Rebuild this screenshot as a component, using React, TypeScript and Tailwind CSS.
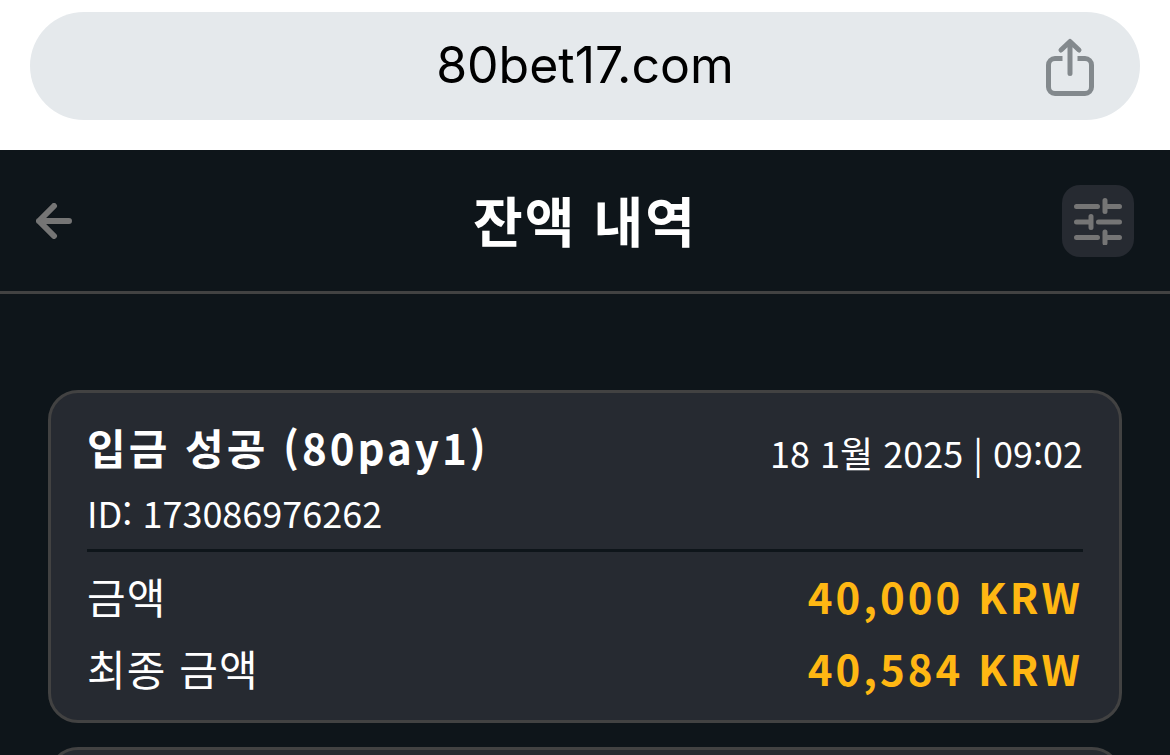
import React from 'react';

interface Transaction {
  id: string;
  title: string;
  date: string;
  dateTime: string;
  amount: string;
  finalAmount: string;
}

const transactions: Transaction[] = [
  {
    id: '173086976262',
    title: '입금 성공 (80pay1)',
    date: '18 1월 2025 | 09:02',
    dateTime: '2025-01-18T09:02',
    amount: '40,000 KRW',
    finalAmount: '40,584 KRW',
  },
];

const ShareIcon: React.FC = () => (
  <svg
    width="48"
    height="60"
    viewBox="0 0 48 60"
    fill="none"
    stroke="currentColor"
    strokeWidth="5"
    aria-hidden="true"
  >
    <path d="M16.500 20.500H9a6.500 6.500 0 0 0-6.500 6.500V49a6.500 6.500 0 0 0 6.500 6.500h30a6.500 6.500 0 0 0 6.500-6.500V27a6.500 6.500 0 0 0-6.500-6.500h-7.500" />
    <path d="M24 35.500V4M15 12 24 3.500l9 8.500" strokeLinecap="round" strokeLinejoin="round" />
  </svg>
);

const BackIcon: React.FC = () => (
  <svg
    width="36"
    height="36"
    viewBox="0 0 36 36"
    fill="none"
    stroke="currentColor"
    strokeWidth="6"
    strokeLinecap="round"
    strokeLinejoin="round"
    aria-hidden="true"
  >
    <path d="M18 3 3 18l15 15M3 18h30" />
    <path d="M4 18 10 12v12z" fill="currentColor" stroke="none" />
  </svg>
);

const FilterIcon: React.FC = () => (
  <svg
    width="48"
    height="48"
    viewBox="0 0 48 48"
    fill="none"
    stroke="currentColor"
    strokeWidth="5"
    strokeLinecap="round"
    aria-hidden="true"
  >
    <path d="M2.500 9.500h21M31 3.500v11M31 9.500h14.500" />
    <path d="M2.500 25h14M17 19.500v11M24.500 25h21" />
    <path d="M2.500 40.500h21M31 35v11M31 40.500h14.500" />
  </svg>
);

const AddressBar: React.FC = () => (
  <div className="bg-white px-[30px] pt-3 pb-[30px]">
    <div className="grid h-[108px] grid-cols-[48px_1fr_48px] items-center rounded-full bg-[#e5e9ec] px-[46px]">
      <span className="col-start-2 pb-0.5 text-center font-[Inter,sans-serif] text-[50px] leading-[60px] text-black">
        80bet17.com
      </span>
      <button type="button" aria-label="공유" className="pt-1 text-[#83898d]">
        <ShareIcon />
      </button>
    </div>
  </div>
);

const PageHeader: React.FC = () => (
  <header className="grid h-36 shrink-0 grid-cols-[72px_1fr_72px] items-center border-b-[3px] border-[#424242] px-9">
    <button type="button" aria-label="뒤로" className="flex h-[72px] items-center text-[#757575]">
      <BackIcon />
    </button>
    <h1 className="pb-0.5 text-center text-[54px] leading-[72px] font-bold tracking-[2px]">잔액 내역</h1>
    <button
      type="button"
      aria-label="필터"
      className="flex size-[72px] items-center justify-center rounded-[18px] bg-[#262a31] text-[#757575]"
    >
      <FilterIcon />
    </button>
  </header>
);

const TransactionCard: React.FC<{ transaction: Transaction }> = ({ transaction }) => (
  <article className="rounded-[30px] border-[3px] border-[#424242] bg-[#262a31] px-9 pt-6 pb-4">
    <div className="flex items-start justify-between">
      <h2 className="text-[42px] leading-[60px] font-bold tracking-[3px]">{transaction.title}</h2>
      <time dateTime={transaction.dateTime} className="text-[36px] leading-[70px]">
        {transaction.date}
      </time>
    </div>
    <p className="border-b-[3px] border-[#0e151a] pb-3 text-[36px] leading-[50px]">ID: {transaction.id}</p>
    <dl className="pt-2 text-[42px] leading-[72px]">
      <div className="flex justify-between">
        <dt className="tracking-wide">금액</dt>
        <dd className="font-bold tracking-[3px] text-[#ffb713]">{transaction.amount}</dd>
      </div>
      <div className="flex justify-between">
        <dt className="tracking-wide">최종 금액</dt>
        <dd className="font-bold tracking-[3px] text-[#ffb713]">{transaction.finalAmount}</dd>
      </div>
    </dl>
  </article>
);

export default function App() {
  return (
    <div
      lang="ko"
      className="flex h-screen flex-col overflow-hidden bg-[#0e151a] font-['Noto_Sans_CJK_KR',sans-serif] text-white"
    >
      <AddressBar />
      <PageHeader />
      <main className="flex flex-col gap-6 px-12 pt-24">
        {transactions.map((transaction) => (
          <TransactionCard key={transaction.id} transaction={transaction} />
        ))}
        <div className="h-80 shrink-0 rounded-[30px] border-[3px] border-[#424242] bg-[#262a31]" />
      </main>
    </div>
  );
}
